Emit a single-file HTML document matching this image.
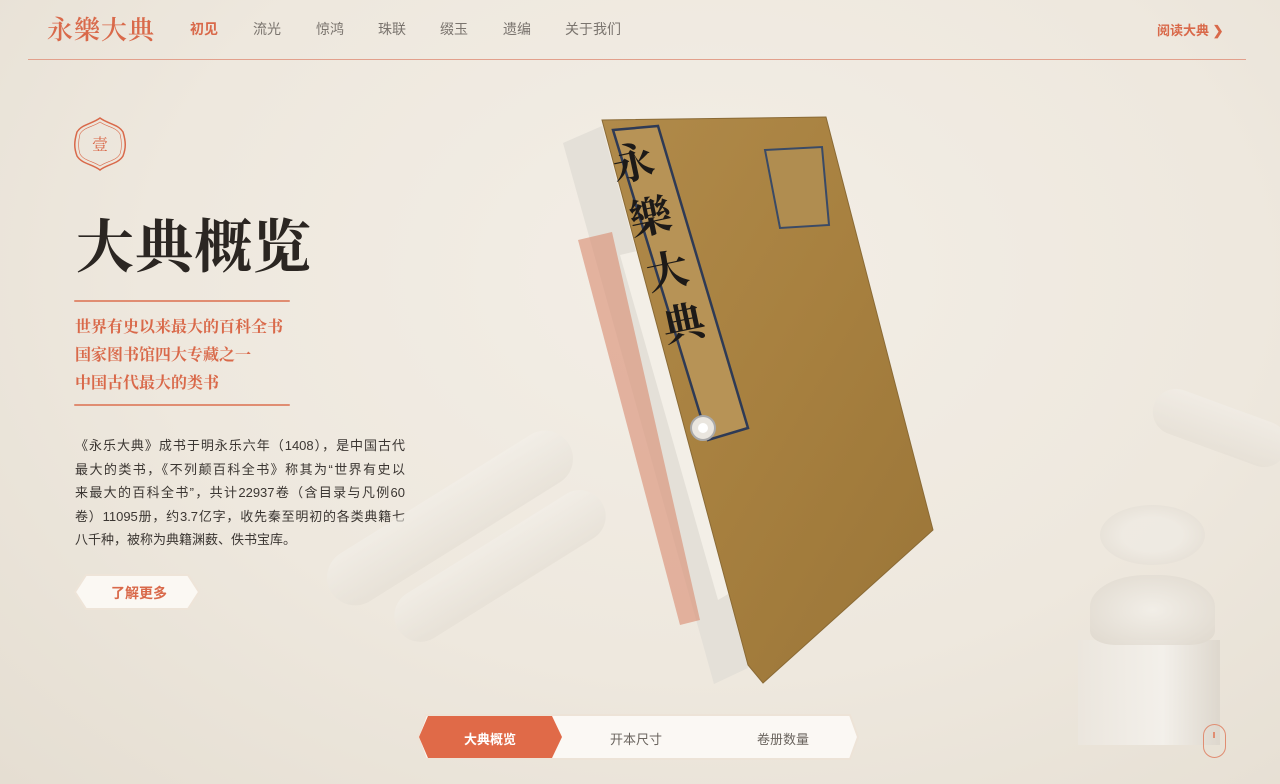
<!DOCTYPE html>
<html><head><meta charset="utf-8">
<style>
*{margin:0;padding:0;box-sizing:border-box}
body{width:1280px;height:784px;overflow:hidden;position:relative;font-family:"Liberation Sans","Noto Sans CJK SC",sans-serif;
background:radial-gradient(ellipse at 55% 35%,#f3eee6 0%,#eee8de 55%,#e5ded2 100%);}
.serif{font-family:"Liberation Serif","Noto Serif CJK SC",serif}
.a{position:absolute}
nav span{position:absolute;top:19px;font-size:14px;color:#7a746e}
.body div{text-align-last:justify;white-space:nowrap;height:23.5px}
</style></head><body>
<div class="a serif" style="left:47px;top:10px;font-size:26px;color:#d9694a;font-weight:600;letter-spacing:1px">永樂大典</div>
<nav>
<span style="left:190px;color:#d9694a;font-weight:bold">初见</span>
<span style="left:253px">流光</span>
<span style="left:316px">惊鸿</span>
<span style="left:378px">珠联</span>
<span style="left:440px">缀玉</span>
<span style="left:503px">遗编</span>
<span style="left:565px">关于我们</span>
<span style="left:1157px;color:#d9694a;font-weight:bold;font-size:13px;top:20px">阅读大典 ❯</span>
</nav>
<div class="a" style="left:28px;top:59px;width:1218px;height:1px;background:#e2a08c"></div>

<svg class="a" style="left:74px;top:116px" width="52" height="56" viewBox="0 0 52 56">
<path d="M26 2 C34 8 44 8 49 16 C52 26 52 32 49 40 C44 48 34 48 26 54 C18 48 8 48 3 40 C0 32 0 26 3 16 C8 8 18 8 26 2Z" fill="none" stroke="#d9694a" stroke-width="1.5"/>
<path d="M26 6 C33 11 42 11 46 18 C48 26 48 32 46 38 C42 45 33 45 26 50 C19 45 10 45 6 38 C4 32 4 26 6 18 C10 11 19 11 26 6Z" fill="none" stroke="#d9694a" stroke-width=".6"/>
<text x="26" y="34" text-anchor="middle" font-size="16" fill="#d9694a" font-family="Noto Serif CJK SC,serif">壹</text>
</svg>
<div class="a serif" style="left:76px;top:200px;font-size:58px;font-weight:bold;color:#2b2622;letter-spacing:1px">大典概览</div>
<div class="a" style="left:74px;top:300px;width:216px;height:2px;background:#e08d72;border-radius:2px"></div>
<div class="a serif" style="left:75px;top:314px;font-size:16px;line-height:28px;color:#d9694a;font-weight:bold">世界有史以来最大的百科全书<br>国家图书馆四大专藏之一<br>中国古代最大的类书</div>
<div class="a" style="left:74px;top:404px;width:216px;height:2px;background:#e08d72;border-radius:2px"></div>
<div class="a body" style="left:75px;top:434px;width:330px;font-size:13px;line-height:23.5px;color:#3b3632">
<div>《永乐大典》成书于明永乐六年（1408），是中国古代</div>
<div>最大的类书，《不列颠百科全书》称其为“世界有史以</div>
<div>来最大的百科全书”，共计22937卷（含目录与凡例60</div>
<div>卷）11095册，约3.7亿字，收先秦至明初的各类典籍七</div>
<div style="text-align-last:left">八千种，被称为典籍渊薮、佚书宝库。</div>
</div>
<svg class="a" style="left:74px;top:574px" width="126" height="36"><polygon points="12,1 114,1 125,18 114,35 12,35 1,18" fill="#fbf8f3" stroke="#eee4d8" stroke-width="2"/></svg>
<div class="a" style="left:111px;top:583px;font-size:14px;color:#d9694a;font-weight:bold">了解更多</div>

<div class="a" style="left:310px;top:490px;width:280px;height:56px;border-radius:28px;background:linear-gradient(#f3f0ea,#e2dcd2);transform:rotate(-32deg);opacity:.55"></div>
<div class="a" style="left:380px;top:540px;width:240px;height:52px;border-radius:26px;background:linear-gradient(#f3f0ea,#e2dcd2);transform:rotate(-32deg);opacity:.55"></div>
<div class="a" style="left:1100px;top:505px;width:105px;height:60px;border-radius:50%;background:radial-gradient(#efebe4 40%,#dcd5ca);opacity:.7"></div>
<div class="a" style="left:1078px;top:640px;width:142px;height:105px;background:linear-gradient(90deg,#ebe6de,#f4f1ec 60%,#dcd6cc);opacity:.9"></div>
<div class="a" style="left:1090px;top:575px;width:125px;height:70px;border-radius:45% 45% 20% 20%;background:radial-gradient(#f3f0ea,#dcd5ca);opacity:.8"></div>
<div class="a" style="left:1150px;top:405px;width:140px;height:46px;border-radius:23px;background:linear-gradient(#f2eee8,#e3ddd3);transform:rotate(20deg);opacity:.6"></div>

<svg class="a" style="left:0;top:0" width="1280" height="784">
<defs><linearGradient id="cv" x1="0" y1="0" x2="1" y2="1"><stop offset="0" stop-color="#b08a4a"/><stop offset=".5" stop-color="#a7803f"/><stop offset="1" stop-color="#9a7538"/></linearGradient></defs>
<polygon points="563,143 602,126 748,668 714,684" fill="#e4e0d8"/>
<polygon points="578,240 612,232 700,620 680,625" fill="#d98a70" opacity=".6"/>
<polygon points="620,255 650,248 735,590 718,600" fill="#f3efe7"/>
<polygon points="602,120 826,117 933,530 763,683 748,665" fill="url(#cv)" stroke="#8a6a35" stroke-width="1"/>
<polygon points="613,130 658,126 748,428 708,440" fill="#b79356" stroke="#2e3a55" stroke-width="2.5"/>
<polygon points="765,150 822,147 829,225 780,228" fill="#b08d50" stroke="#3a4a66" stroke-width="2"/>
<text font-size="42" font-weight="bold" fill="#1d1a18" font-family="Noto Serif CJK SC,serif" transform="translate(616,182) rotate(-12)">永</text>
<text font-size="42" font-weight="bold" fill="#1d1a18" font-family="Noto Serif CJK SC,serif" transform="translate(633,236) rotate(-12)">樂</text>
<text font-size="42" font-weight="bold" fill="#1d1a18" font-family="Noto Serif CJK SC,serif" transform="translate(650,290) rotate(-12)">大</text>
<text font-size="42" font-weight="bold" fill="#1d1a18" font-family="Noto Serif CJK SC,serif" transform="translate(666,342) rotate(-12)">典</text>
<circle cx="703" cy="428" r="12" fill="#eae6df" stroke="#aaa" stroke-width="2"/>
<circle cx="703" cy="428" r="5" fill="#fff"/>
</svg>

<svg class="a" style="left:416px;top:712px" width="444" height="50">
<polygon points="10,3 434,3 442,25 434,47 10,47 2,25" fill="#fbf8f4" stroke="#ede3d7" stroke-width="2"/>
<polygon points="12,4 136,4 146,25 136,46 12,46 3,25" fill="#e06a48"/>
</svg>
<div class="a" style="left:464px;top:729px;font-size:13px;color:#fff;font-weight:bold">大典概览</div>
<div class="a" style="left:610px;top:729px;font-size:13px;color:#6b655f">开本尺寸</div>
<div class="a" style="left:757px;top:729px;font-size:13px;color:#6b655f">卷册数量</div>
<div class="a" style="left:1203px;top:724px;width:23px;height:34px;border:1.5px solid #e08d72;border-radius:12px"></div>
<div class="a" style="left:1213px;top:732px;width:2px;height:6px;background:#e08d72"></div>
</body></html>
